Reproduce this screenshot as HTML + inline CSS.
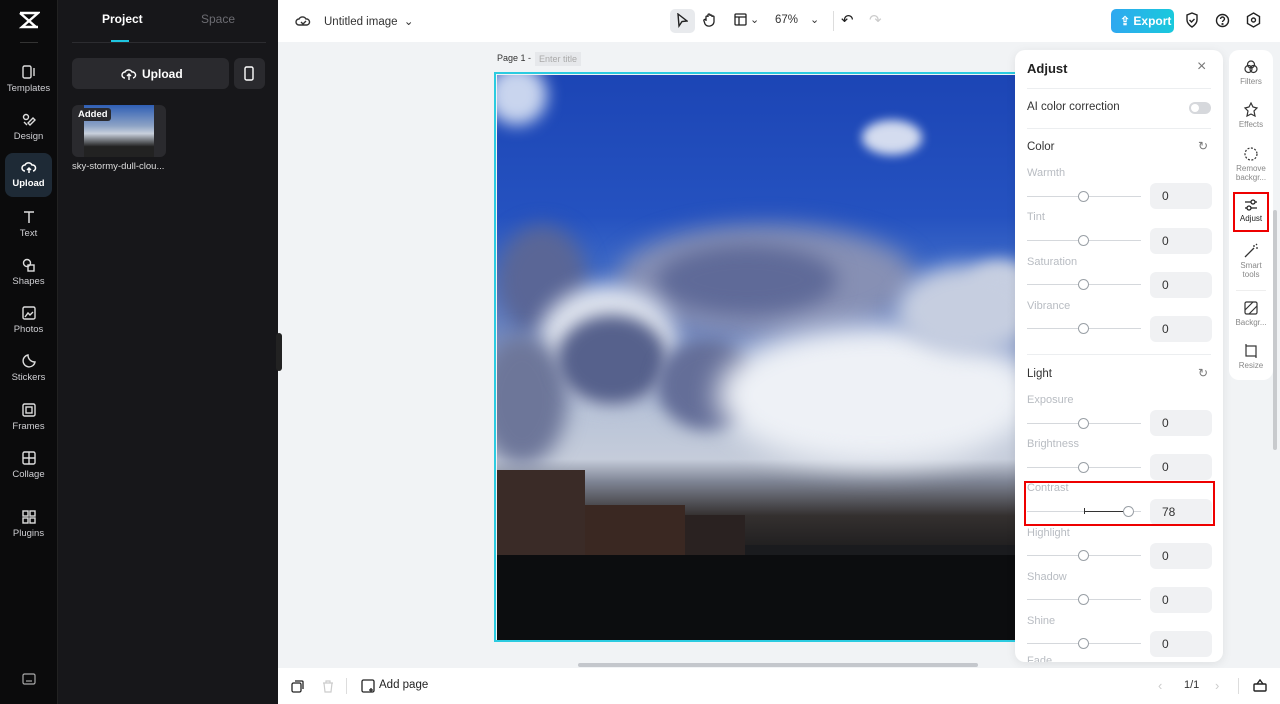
<!DOCTYPE html>
<html><head><meta charset="utf-8"><style>
*{box-sizing:border-box;margin:0;padding:0}
body{width:1280px;height:704px;overflow:hidden;font-family:"Liberation Sans",sans-serif;background:#f1f3f5;position:relative;font-size:12px}
.abs{position:absolute}
#rail{left:0;top:0;width:58px;height:704px;background:#0b0b0c;border-right:1px solid #222}
.ri{position:absolute;left:5px;width:47px;height:44px;color:#cfcfd3;font-size:9.5px;text-align:center}
.ri svg{display:block;margin:6px auto 3px}
#panel{left:58px;top:0;width:220px;height:704px;background:#17171a}
#top{left:278px;top:0;width:1002px;height:42px;background:#fff}
#bot{left:278px;top:668px;width:1002px;height:36px;background:#fff}
.lbl{position:absolute;left:1027px;color:#b8bcc2;font-size:11px}
.trk{position:absolute;left:1027px;width:114px;height:1px;background:#d5d8dc}
.knob{position:absolute;width:11px;height:11px;border-radius:50%;background:#fff;border:1px solid #9aa0a6}
.inp{position:absolute;left:1150px;width:62px;height:26px;background:#f0f1f3;border-radius:6px;color:#333;font-size:12px;padding:6px 0 0 12px}
.si{position:absolute;left:1231px;width:40px;text-align:center;color:#888;font-size:8px;line-height:9px}
.si svg{display:block;margin:0 auto 2px}
.b{position:absolute;border-radius:50%}
</style></head><body>
<div id="rail" class="abs">
 <svg class="abs" style="left:18px;top:11px" width="22" height="18" viewBox="0 0 22 18"><path d="M2 2h18L4 16h16M2 2l16 14M2 16" stroke="#fff" stroke-width="2.4" fill="none"/></svg>
 <div class="abs" style="left:20px;top:42px;width:18px;height:1px;background:#333"></div>
 <div class="ri" style="top:58px"><svg width="16" height="16" viewBox="0 0 16 16" fill="none" stroke="#ddd" stroke-width="1.4"><rect x="2" y="2" width="8" height="12" rx="1.5"/><path d="M13 4v8"/></svg>Templates</div>
 <div class="ri" style="top:106px"><svg width="16" height="16" viewBox="0 0 16 16" fill="none" stroke="#ddd" stroke-width="1.4"><circle cx="5" cy="5" r="2.5"/><path d="M9 13l5-5-2-2-5 5zM3 10l3 3"/></svg>Design</div>
 <div class="ri" style="top:153px;background:#1e2a36;border-radius:8px;color:#fff;font-weight:bold"><svg width="16" height="16" viewBox="0 0 16 16" fill="none" stroke="#fff" stroke-width="1.5"><path d="M4 12a3 3 0 010-6 4 4 0 017 0 3 3 0 011 6M8 9v5M6 11l2-2 2 2"/></svg>Upload</div>
 <div class="ri" style="top:203px"><svg width="16" height="16" viewBox="0 0 16 16" fill="none" stroke="#ddd" stroke-width="1.5"><path d="M3 3h10M8 3v11"/></svg>Text</div>
 <div class="ri" style="top:251px"><svg width="16" height="16" viewBox="0 0 16 16" fill="none" stroke="#ddd" stroke-width="1.4"><circle cx="6" cy="6" r="3.5"/><rect x="7" y="8" width="6" height="6"/></svg>Shapes</div>
 <div class="ri" style="top:299px"><svg width="16" height="16" viewBox="0 0 16 16" fill="none" stroke="#ddd" stroke-width="1.4"><rect x="2" y="2" width="12" height="12" rx="1.5"/><path d="M4 12l3-4 2 2 3-3"/></svg>Photos</div>
 <div class="ri" style="top:347px"><svg width="16" height="16" viewBox="0 0 16 16" fill="none" stroke="#ddd" stroke-width="1.4"><path d="M14 9A6 6 0 117 2c0 4 3 7 7 7z"/></svg>Stickers</div>
 <div class="ri" style="top:396px"><svg width="16" height="16" viewBox="0 0 16 16" fill="none" stroke="#ddd" stroke-width="1.4"><rect x="2" y="2" width="12" height="12" rx="1.5"/><rect x="5" y="5" width="6" height="6"/></svg>Frames</div>
 <div class="ri" style="top:444px"><svg width="16" height="16" viewBox="0 0 16 16" fill="none" stroke="#ddd" stroke-width="1.4"><rect x="2" y="2" width="12" height="12" rx="1.5"/><path d="M8 2v12M2 8h12"/></svg>Collage</div>
 <div class="ri" style="top:503px"><svg width="16" height="16" viewBox="0 0 16 16" fill="none" stroke="#ddd" stroke-width="1.4"><rect x="2" y="2" width="5" height="5"/><rect x="9" y="2" width="5" height="5"/><rect x="2" y="9" width="5" height="5"/><rect x="9" y="9" width="5" height="5"/></svg>Plugins</div>
 <svg class="abs" style="left:22px;top:673px" width="14" height="12" viewBox="0 0 14 12" fill="none" stroke="#aaa" stroke-width="1.2"><rect x="1" y="1" width="12" height="10" rx="1.5"/><path d="M4 8h6"/></svg>
</div>
<div id="panel" class="abs">
 <div class="abs" style="left:44px;top:12px;color:#fff;font-weight:bold;font-size:12px">Project</div>
 <div class="abs" style="left:143px;top:12px;color:#6c6c72;font-size:12px">Space</div>
 <div class="abs" style="left:53px;top:40px;width:18px;height:2px;background:#1fc5e0"></div>
 <div class="abs" style="left:14px;top:42px;width:194px;height:1px;background:#2c2c30"></div>
 <div class="abs" style="left:14px;top:58px;width:157px;height:31px;background:#2a2a2e;border-radius:6px;color:#fff;font-weight:bold;font-size:12px;padding:9px 0 0 70px">Upload
  <svg class="abs" style="left:49px;top:8px" width="16" height="15" viewBox="0 0 16 15" fill="none" stroke="#fff" stroke-width="1.4"><path d="M4 12a3 3 0 010-6 4 4 0 017 0 3 3 0 011 6M8 8v6M6 10l2-2 2 2"/></svg></div>
 <div class="abs" style="left:176px;top:58px;width:31px;height:31px;background:#2a2a2e;border-radius:6px"><svg style="margin:8px 0 0 10px" width="10" height="15" viewBox="0 0 10 15" fill="none" stroke="#fff" stroke-width="1.4"><rect x="1" y="1" width="8" height="13" rx="1.5"/></svg></div>
 <div class="abs" style="left:14px;top:105px;width:94px;height:52px;background:#2a2a2e;border-radius:6px;overflow:hidden">
  <div class="abs" style="left:12px;top:0;width:70px;height:52px;background:linear-gradient(#2f5fb5,#8da3c5 40%,#c8d0dc 55%,#222 80%)"></div>
  <div class="abs" style="left:3px;top:3px;background:#2a2a2e;color:#fff;font-weight:bold;font-size:9.5px;padding:1px 3px;border-radius:3px">Added</div>
 </div>
 <div class="abs" style="left:14px;top:161px;color:#ddd;font-size:9.5px">sky-stormy-dull-clou...</div>
</div>
<div class="abs" style="left:276px;top:333px;width:6px;height:38px;background:#222;border-radius:3px"></div>
<div id="top" class="abs">
 <svg class="abs" style="left:17px;top:13px" width="16" height="15" viewBox="0 0 16 15" fill="none" stroke="#333" stroke-width="1.4"><path d="M4 12a3 3 0 010-6 4 4 0 017 0 3 3 0 011 6zM6 9l2 2 3-3"/></svg>
 <div class="abs" style="left:46px;top:14px;color:#333;font-size:11.5px">Untitled image &nbsp;⌄</div>
 <div class="abs" style="left:392px;top:9px;width:25px;height:24px;background:#e8eaed;border-radius:5px"></div>
 <svg class="abs" style="left:398px;top:13px" width="12" height="15" viewBox="0 0 12 15" fill="none" stroke="#222" stroke-width="1.4"><path d="M2 1l9 7-5 .5L3 13z"/></svg>
 <svg class="abs" style="left:425px;top:12px" width="14" height="16" viewBox="0 0 14 16" fill="none" stroke="#222" stroke-width="1.3"><path d="M3 9V5a1 1 0 012 0V3a1 1 0 012 0v1a1 1 0 012 0v1a1 1 0 012 0v5a5 5 0 01-9 2L1 9a1 1 0 012-1"/></svg>
 <svg class="abs" style="left:456px;top:13px" width="13" height="13" viewBox="0 0 13 13" fill="none" stroke="#222" stroke-width="1.3"><rect x="1" y="1" width="11" height="11" rx="1"/><path d="M1 4h11M5 4v8"/></svg>
 <div class="abs" style="left:472px;top:13px;color:#333;font-size:11px">⌄</div>
 <div class="abs" style="left:497px;top:14px;color:#333;font-size:11.5px">67%</div>
 <div class="abs" style="left:532px;top:13px;color:#333;font-size:11px">⌄</div>
 <div class="abs" style="left:555px;top:11px;width:1px;height:20px;background:#ddd"></div>
 <div class="abs" style="left:563px;top:11px;color:#222;font-size:15px">↶</div>
 <div class="abs" style="left:591px;top:11px;color:#ccc;font-size:15px">↷</div>
 <div class="abs" style="left:833px;top:9px;width:63px;height:24px;border-radius:5px;background:linear-gradient(90deg,#2fa8f0,#19c9dc);color:#fff;font-weight:bold;font-size:12px;padding:5px 0 0 9px">⇪ Export</div>
 <svg class="abs" style="left:907px;top:12px" width="14" height="16" viewBox="0 0 14 16" fill="none" stroke="#222" stroke-width="1.4"><path d="M7 1l5 2v5c0 3-2 5-5 7-3-2-5-4-5-7V3zM4.5 8l2 2 3-3"/></svg>
 <svg class="abs" style="left:937px;top:13px" width="15" height="15" viewBox="0 0 15 15" fill="none" stroke="#222" stroke-width="1.4"><circle cx="7.5" cy="7.5" r="6"/><path d="M5.5 6a2 2 0 114 0c0 1.5-2 1.5-2 3"/><circle cx="7.5" cy="11" r=".4"/></svg>
 <svg class="abs" style="left:968px;top:12px" width="15" height="16" viewBox="0 0 15 16" fill="none" stroke="#222" stroke-width="1.4"><path d="M7.5 1l6 3.5v7l-6 3.5-6-3.5v-7z"/><circle cx="7.5" cy="8" r="2"/></svg>
</div>
<div class="abs" style="left:497px;top:53px;font-size:9px;color:#333">Page 1 -</div>
<div class="abs" style="left:535px;top:52px;font-size:9px;color:#aaa;background:#e6e8eb;padding:2px 4px">Enter title</div>
<div class="abs" style="left:494px;top:72px;width:540px;height:570px;border:2px solid #2ccbe0"></div>
<div class="abs" style="left:497px;top:75px;width:520px;height:565px;overflow:hidden;background:linear-gradient(180deg,#1c45b5 0%,#2552c0 25%,#3a66c6 33%,#6d86c2 45%,#b9c4d8 60%,#c5ccda 68%,#7e8494 72%,#34302f 78%,#111214 88%,#0a0b0d 100%)">
 <div class="b" style="left:-10px;top:-10px;width:60px;height:60px;background:#c9d5ee;filter:blur(8px)"></div>
 <div class="b" style="left:365px;top:45px;width:60px;height:35px;background:#d4dcef;filter:blur(5px)"></div>
 <div class="b" style="left:470px;top:185px;width:70px;height:60px;background:#c8d0e2;filter:blur(8px)"></div>
 <div class="b" style="left:120px;top:150px;width:300px;height:110px;background:#8790b4;filter:blur(12px)"></div>
 <div class="b" style="left:160px;top:170px;width:180px;height:70px;background:#5f6a98;filter:blur(10px)"></div>
 <div class="b" style="left:0;top:150px;width:90px;height:110px;background:#5a6696;filter:blur(10px)"></div>
 <div class="b" style="left:40px;top:210px;width:140px;height:120px;background:#dfe4ee;filter:blur(10px)"></div>
 <div class="b" style="left:-20px;top:260px;width:90px;height:130px;background:#6d7699;filter:blur(10px)"></div>
 <div class="b" style="left:60px;top:240px;width:110px;height:90px;background:#56618c;filter:blur(8px)"></div>
 <div class="b" style="left:160px;top:265px;width:100px;height:90px;background:#646e98;filter:blur(8px)"></div>
 <div class="b" style="left:220px;top:250px;width:320px;height:140px;background:#eef1f6;filter:blur(14px)"></div>
 <div class="b" style="left:400px;top:190px;width:140px;height:90px;background:#c6cee0;filter:blur(10px)"></div>
 <div class="abs" style="left:0;top:395px;width:88px;height:170px;background:#3a2b27"></div>
 <div class="abs" style="left:88px;top:430px;width:100px;height:135px;background:#3a2822"></div>
 <div class="abs" style="left:188px;top:440px;width:60px;height:125px;background:#2a2221"></div>
 <div class="abs" style="left:248px;top:470px;width:272px;height:95px;background:#1a1b1e"></div>
 <div class="abs" style="left:0;top:480px;width:520px;height:85px;background:#0c0d0f"></div>
</div>
<!-- adjust panel -->
<div class="abs" style="left:1015px;top:50px;width:208px;height:612px;background:#fff;border-radius:10px;box-shadow:0 2px 10px rgba(0,0,0,.08);overflow:hidden">
 <div class="abs" style="left:12px;top:11px;font-weight:bold;font-size:13px;color:#222">Adjust</div>
 <div class="abs" style="left:182px;top:8px;font-size:16px;color:#777">×</div>
 <div class="abs" style="left:12px;top:38px;width:184px;height:1px;background:#eceef0"></div>
 <div class="abs" style="left:12px;top:51px;font-size:11.5px;color:#333">AI color correction</div>
 <div class="abs" style="left:174px;top:52px;width:22px;height:12px;border-radius:6px;background:#d6d8dc"><div style="margin:2px;width:8px;height:8px;border-radius:50%;background:#fff"></div></div>
 <div class="abs" style="left:12px;top:78px;width:184px;height:1px;background:#eceef0"></div>
 <div class="abs" style="left:12px;top:91px;font-size:11.5px;color:#333">Color</div>
 <div class="abs" style="left:183px;top:89px;font-size:12px;color:#777">↻</div>
 <div class="abs" style="left:12px;top:304px;width:184px;height:1px;background:#eceef0"></div>
 <div class="abs" style="left:12px;top:318px;font-size:11.5px;color:#333">Light</div>
 <div class="abs" style="left:183px;top:316px;font-size:12px;color:#777">↻</div>
 <div class="abs" style="left:12px;top:605px;font-size:11px;color:#b8bcc2">Fade</div>
</div>
<div class="lbl" style="top:167px">Warmth</div><div class="trk" style="top:196px"></div><div class="knob" style="left:1078px;top:191px"></div><div class="inp" style="top:183px">0</div>
<div class="lbl" style="top:211px">Tint</div><div class="trk" style="top:240px"></div><div class="knob" style="left:1078px;top:235px"></div><div class="inp" style="top:228px">0</div>
<div class="lbl" style="top:256px">Saturation</div><div class="trk" style="top:284px"></div><div class="knob" style="left:1078px;top:279px"></div><div class="inp" style="top:272px">0</div>
<div class="lbl" style="top:300px">Vibrance</div><div class="trk" style="top:328px"></div><div class="knob" style="left:1078px;top:323px"></div><div class="inp" style="top:316px">0</div>
<div class="lbl" style="top:394px">Exposure</div><div class="trk" style="top:423px"></div><div class="knob" style="left:1078px;top:418px"></div><div class="inp" style="top:410px">0</div>
<div class="lbl" style="top:438px">Brightness</div><div class="trk" style="top:467px"></div><div class="knob" style="left:1078px;top:462px"></div><div class="inp" style="top:454px">0</div>
<div class="lbl" style="top:482px">Contrast</div><div class="trk" style="top:511px"></div><div class="abs" style="left:1084px;top:511px;width:45px;height:1px;background:#333"></div><div class="abs" style="left:1084px;top:508px;width:1px;height:6px;background:#333"></div><div class="knob" style="left:1123px;top:506px"></div><div class="inp" style="top:499px">78</div>
<div class="abs" style="left:1024px;top:481px;width:191px;height:45px;border:2px solid #e00"></div>
<div class="lbl" style="top:527px">Highlight</div><div class="trk" style="top:555px"></div><div class="knob" style="left:1078px;top:550px"></div><div class="inp" style="top:543px">0</div>
<div class="lbl" style="top:571px">Shadow</div><div class="trk" style="top:599px"></div><div class="knob" style="left:1078px;top:594px"></div><div class="inp" style="top:587px">0</div>
<div class="lbl" style="top:615px">Shine</div><div class="trk" style="top:643px"></div><div class="knob" style="left:1078px;top:638px"></div><div class="inp" style="top:631px">0</div>
<div class="abs" style="left:578px;top:663px;width:400px;height:4px;background:#c4c7cc;border-radius:2px"></div>
<!-- side tools -->
<div class="abs" style="left:1229px;top:50px;width:44px;height:330px;background:#fff;border-radius:10px"></div>
<div class="abs" style="left:1273px;top:210px;width:4px;height:240px;background:#c8cacd;border-radius:2px"></div>
<div class="si" style="top:59px"><svg width="16" height="16" viewBox="0 0 16 16" fill="none" stroke="#333" stroke-width="1.2"><circle cx="8" cy="5.5" r="3.5"/><circle cx="5.5" cy="10" r="3.5"/><circle cx="10.5" cy="10" r="3.5"/></svg>Filters</div>
<div class="si" style="top:102px"><svg width="16" height="16" viewBox="0 0 16 16" fill="none" stroke="#333" stroke-width="1.2"><path d="M8 1l2 4 4 1-3 3 1 5-4-2-4 2 1-5-3-3 4-1z"/></svg>Effects</div>
<div class="si" style="top:146px"><svg width="16" height="16" viewBox="0 0 16 16" fill="none" stroke="#333" stroke-width="1.2" stroke-dasharray="2 1.5"><circle cx="8" cy="8" r="6"/></svg>Remove backgr...</div>
<div class="abs" style="left:1233px;top:192px;width:36px;height:40px;border:2px solid #e00"></div>
<div class="si" style="top:198px;color:#222"><svg width="16" height="14" viewBox="0 0 16 14" fill="none" stroke="#222" stroke-width="1.3"><path d="M2 4h12M2 10h12"/><circle cx="10" cy="4" r="2" fill="#fff"/><circle cx="6" cy="10" r="2" fill="#fff"/></svg>Adjust</div>
<div class="si" style="top:243px"><svg width="16" height="16" viewBox="0 0 16 16" fill="none" stroke="#333" stroke-width="1.3"><path d="M2 14l9-9M11 2v2M13 5h2M13 2l1-1"/></svg>Smart tools</div>
<div class="abs" style="left:1236px;top:290px;width:30px;height:1px;background:#eee"></div>
<div class="si" style="top:300px"><svg width="16" height="16" viewBox="0 0 16 16" fill="none" stroke="#333" stroke-width="1.2"><rect x="2" y="2" width="12" height="12" rx="1.5"/><path d="M2 10l8-8M6 14l8-8"/></svg>Backgr...</div>
<div class="si" style="top:343px"><svg width="16" height="16" viewBox="0 0 16 16" fill="none" stroke="#333" stroke-width="1.2"><rect x="3" y="3" width="10" height="10"/><path d="M3 1v2M13 13v2"/></svg>Resize</div>
<div id="bot" class="abs">
 <svg class="abs" style="left:13px;top:12px" width="13" height="13" viewBox="0 0 13 13" fill="none" stroke="#222" stroke-width="1.3"><rect x="1" y="3" width="9" height="9" rx="1.5"/><path d="M4 1h7a1 1 0 011 1v7"/></svg>
 <svg class="abs" style="left:44px;top:12px" width="12" height="13" viewBox="0 0 12 13" fill="none" stroke="#ccc" stroke-width="1.2"><path d="M1 3h10M4 3V1h4v2M2 3l1 9h6l1-9"/></svg>
 <div class="abs" style="left:68px;top:10px;width:1px;height:16px;background:#ddd"></div>
 <svg class="abs" style="left:83px;top:11px" width="14" height="14" viewBox="0 0 14 14" fill="none" stroke="#222" stroke-width="1.3"><rect x="1" y="1" width="12" height="12" rx="1.5"/><path d="M10 9v4M8 11h4"/></svg>
 <div class="abs" style="left:101px;top:11px;font-size:11.5px;color:#222">Add page</div>
 <div class="abs" style="left:880px;top:10px;color:#ccc;font-size:13px">‹</div>
 <div class="abs" style="left:906px;top:11px;color:#333;font-size:11px">1/1</div>
 <div class="abs" style="left:937px;top:10px;color:#ccc;font-size:13px">›</div>
 <div class="abs" style="left:960px;top:10px;width:1px;height:16px;background:#ddd"></div>
 <svg class="abs" style="left:975px;top:11px" width="14" height="13" viewBox="0 0 14 13" fill="none" stroke="#222" stroke-width="1.4"><rect x="1" y="5" width="12" height="7" rx="1"/><path d="M4 5l3-4 3 4"/></svg>
</div>
</body></html>
